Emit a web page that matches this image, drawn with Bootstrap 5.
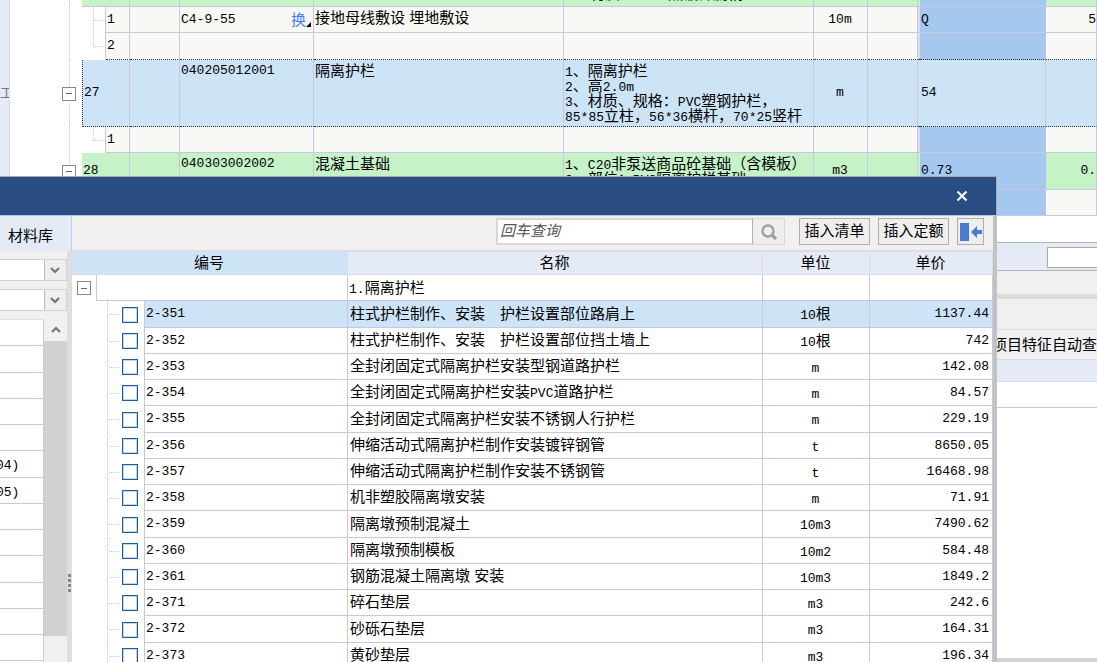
<!DOCTYPE html>
<html lang="zh-CN">
<head>
<meta charset="utf-8">
<meta name="viewport" content="width=device-width, initial-scale=1">
<title>清单计价</title>
<link href="https://cdn.jsdelivr.net/npm/bootstrap@5.3.0/dist/css/bootstrap.min.css" rel="stylesheet">
<style>
:root{--line:#c9c7df;--head:#e4ebf7;--pick:#cce4f6;--face:#f0f0f0}
body{font-family:"Liberation Sans","Noto Sans CJK SC",sans-serif;font-size:15px;line-height:15px;color:#000;background:#fff}
.asc,.code{font-family:"Liberation Mono","Noto Sans CJK SC",monospace;font-size:13px}
.asc{line-height:0}
table{table-layout:fixed;width:100%;border-collapse:separate;border-spacing:0}
td,th{padding:0 2px 1px 1px;font-weight:400;white-space:nowrap;overflow:hidden}

/* bill grid behind the dialog */
.strip{width:10px;background:var(--head);border-right:1px solid #d6d9f0;color:#777;padding-top:84px}
.bill td{border-right:1px solid var(--line);border-bottom:1px solid var(--line);background:#f8f8f4}
.bill .green td{background:#c5f3c7}
.bill .qty,.bill .green .qty{background:#a5c8ef;border-right-color:#b9bfe0}
.bill .gap-col{background:#dcdaec;padding:0;border-right:0}
.bill .active td{background:var(--pick);border-bottom:1px dotted #333}
.bill .before td:not(.rail):not(.twig){border-bottom:1px dotted #333}
.bill .active .no{border-left:1px dotted #333}
.bill tr td.rail{background:repeating-linear-gradient(#c9c7df 0 1px,#fff 1px 2px) 59px 0/1px 100% no-repeat #fff;border:0;padding:0 6px 0 52px}
.bill .top{vertical-align:top;padding-top:3px}
.bill td.twig{border-bottom:0;background:repeating-linear-gradient(#c9c7df 0 1px,#fff 1px 2px) 11px 0/1px 50% no-repeat,repeating-linear-gradient(90deg,#c9c7df 0 1px,#fff 1px 2px) 11px 50%/12px 1px no-repeat #fff}
.bill td.twig.more{background-size:1px 100%,12px 1px}
.h6r{height:7px}.h26{height:26px}.h27{height:27px}.h37{height:37px}.h67{height:67px}
.bill td.cut{padding:0 2px}
.cutoff{height:6px;padding:0 0 5px 24px;display:flex;align-items:flex-end;gap:48px}
.toggle{width:14px;height:14px;border:1px solid #888;background:#fff;padding:0;display:flex;align-items:center;justify-content:center}
.toggle::before{content:"";width:6px;height:1px;background:#666}
.swap{color:#4b78ff}

/* panels under the grid */
.under{--edge:calc(100% - 105px)}
.u-white{height:27px;border-bottom:1px solid #b4b4b4}
.u-find{height:28px;background:var(--head);border-bottom:1px solid #b4b4b4;padding:4px 0 3px calc(100% - 50px)}
.u-find input{height:21px;width:100%;border:1px solid #aaa;border-right:0}
.u-bar{height:23px;background:var(--face)}
.u-split{height:5px;background:#dcdcdc}
.u-tabs{height:31px;background:var(--face);border-bottom:1px solid #dadada}
.u-label{height:30px;background:var(--face);border-bottom:1px solid #d6d9f0;padding-left:var(--edge);line-height:29px;white-space:nowrap}
.u-head{height:22px;background:var(--head);border-bottom:1px solid #d6d9f0}
.u-row{height:26px;border-bottom:1px solid var(--line)}
.u-foot{height:4px;background:#d4d4d4}

/* material dialog */
.dlg{top:176px;left:0;bottom:0;width:calc(100% - 100px);background:var(--face);border-top:1px solid #a8a8a8}
.dlg-title{height:38px;background:#294d82;padding-right:28px;border-right:1px solid #a8a8a8}
.dlg-main{border-right:4px solid #c2c2c2;border-top:1px solid #b9c4e0}
.side{width:72px}
.tabtop{height:35px;background:var(--head);border:0;border-right:1px solid #b8d0ec;text-align:left;padding:4px 8px 0}
.combo{height:22px;width:67px;margin-bottom:8px;border:1px solid #d0d0d0;border-left:0;border-radius:0;appearance:none;background:url("data:image/svg+xml,%3Csvg xmlns='http://www.w3.org/2000/svg' width='22' height='20'%3E%3Cpath d='M0 0h22v20H0z' fill='%23eee'/%3E%3Cpath d='M0.500 0v20' stroke='%23bbb'/%3E%3Cpath d='M7 8l4 4 4-4' fill='none' stroke='%23777' stroke-width='2.200'/%3E%3C/svg%3E") right center no-repeat #fff}
.kinds{width:44px;background:#fff;border-right:1px solid var(--line);border-top:1px solid #e0e0e8}
.kinds>div{height:26px;border-bottom:1px solid var(--line);padding-top:5px;overflow:hidden}
.kinds>div:nth-child(4n+2){height:27px}
.kinds .code{margin-left:-4px}
.sbar{width:23px;background:var(--face)}
.sbar .up{height:22px;border:0;padding:0;background:var(--face)}
.sbar .thumb{height:92%;background:#d1d1d1}
.split{width:5px;background:#dedede;padding-bottom:70px;gap:2px}
.split i{width:3px;height:3px;background:#888}
.tools{height:36px;background:var(--face);border-bottom:2px solid #dcdce4;padding:2px 9px 0 0}
.query{width:257px;height:27px;border:2px solid #d8d8d8;border-right:1px solid #b0b0b0;padding:0 2px 2px;font-style:italic;border-radius:0}
.query::placeholder{color:#555}
.tbtn{height:27px;border:1px solid #aeaeae;background:#eee;padding:0 0 2px;width:71px}
.tbtn.find{width:32px;border-color:#d8d8d8;border-left:0;margin-right:14px;padding:0}
.tbtn.dock{width:27px;padding:0}
.tbtn.dock,.tbtn.quota{margin-left:8px}
.items th{height:23px;background:var(--head);border-right:1px solid #d6d9f0;border-bottom:1px solid #d6d9f0;text-align:center}
.items th.sorted{background:var(--pick)}
.items tbody tr{height:26px}
.items tbody tr:nth-child(4n+2){height:27px}
.items td{border-right:1px solid var(--line);border-bottom:1px solid var(--line)}
.items td.bare{border:0;padding:0 0 0 5px}
.items td.group{border-left:1px solid var(--line)}
.items td.fork{border-bottom:0;padding:0 0 0 26px;background:repeating-linear-gradient(#c9c7df 0 1px,#fff 1px 2px) 11px 0/1px 100% no-repeat,repeating-linear-gradient(90deg,#c9c7df 0 1px,#fff 1px 2px) 11px 50%/13px 1px no-repeat}
.items tr.on td:not(.bare):not(.fork){background:var(--pick)}
.items input{appearance:none;display:block;width:16px;height:16px;margin:0;border:1px solid #1f5c99;box-shadow:inset 0 0 0 1px #c3d6e8;background:#fff}
.items td:nth-child(4){padding-left:2px;padding-bottom:2px}
.items .unit{text-align:center}
.items .price{text-align:right;padding-right:3px}
</style>
</head>
<body>
<div class="position-relative vh-100 overflow-hidden d-flex flex-column">
  <div class="d-flex">
    <div class="strip overflow-hidden"><span class="asc">工</span></div>
    <table class="bill flex-grow-1 w-auto">
      <colgroup><col style="width:72px"><col style="width:24px"><col style="width:24px"><col style="width:50px"><col style="width:134px"><col style="width:250px"><col style="width:250px"><col style="width:54px"><col style="width:50px"><col style="width:2px"><col style="width:126px"><col></colgroup>
      <tbody>
      <tr class="green h6r"><td class="rail"></td><td colspan="2"></td><td></td><td></td><td></td><td class="cut"><div class="cutoff"><span>材质</span><span>热镀锌扁钢</span></div></td><td></td><td></td><td class="gap-col"></td><td class="qty"></td><td></td></tr>
      <tr class="h26"><td class="rail"></td><td class="twig more"></td><td class="code">1</td><td></td><td><div class="d-flex justify-content-between align-items-center"><span class="code">C4-9-55</span><span class="swap d-flex align-items-end">换<svg width="5" height="8" viewBox="0 0 5 8"><path d="M5 3v5H0z"/></svg></span></div></td><td class="top">接地母线敷设 埋地敷设</td><td></td><td class="code text-center">10m</td><td></td><td class="gap-col"></td><td class="qty code">Q</td><td class="code text-end pe-0">5</td></tr>
      <tr class="h27 before"><td class="rail"></td><td class="twig"></td><td class="code">2</td><td></td><td></td><td></td><td></td><td></td><td></td><td class="gap-col"></td><td class="qty"></td><td></td></tr>
      <tr class="h67 active"><td class="rail"><button class="toggle" aria-label="折叠 27"></button></td><td colspan="2" class="no code">27</td><td></td><td class="top code">040205012001</td><td class="top">隔离护栏</td><td class="top"><span class="asc">1</span>、隔离护栏<br><span class="asc">2</span>、高<span class="asc">2.0m</span><br><span class="asc">3</span>、材质、规格：<span class="asc">PVC</span>塑钢护栏，<br><span class="asc">85*85</span>立柱，<span class="asc">56*36</span>横杆，<span class="asc">70*25</span>竖杆</td><td class="code text-center">m</td><td></td><td class="gap-col"></td><td class="code">54</td><td></td></tr>
      <tr class="h26"><td class="rail"></td><td class="twig"></td><td class="code">1</td><td></td><td></td><td></td><td></td><td></td><td></td><td class="gap-col"></td><td class="qty"></td><td></td></tr>
      <tr class="h37 green"><td class="rail"><button class="toggle" aria-label="折叠 28"></button></td><td colspan="2" class="code">28</td><td></td><td class="top code">040303002002</td><td class="top">混凝土基础</td><td class="top"><span class="asc">1</span>、<span class="asc">C20</span>非泵送商品砼基础（含模板）<br><span class="asc">2</span>、部位：<span class="asc">PVC</span>隔离护栏基础</td><td class="code text-center">m3</td><td></td><td class="gap-col"></td><td class="qty code">0.73</td><td class="code text-end pe-0">0.</td></tr>
      <tr class="h26"><td class="rail"></td><td class="twig"></td><td></td><td></td><td></td><td></td><td></td><td></td><td></td><td class="gap-col"></td><td class="qty"></td><td></td></tr>
      </tbody>
    </table>
  </div>
  <div class="under flex-grow-1 d-flex flex-column">
    <div class="u-white"></div>
    <div class="u-find"><input type="text" class="d-block" aria-label="查找"></div>
    <div class="u-bar"></div><div class="u-split"></div><div class="u-tabs"></div>
    <div class="u-label overflow-hidden">项目特征自动查找</div>
    <div class="u-head"></div><div class="u-row"></div>
    <div class="flex-grow-1"></div><div class="u-foot"></div>
  </div>

  <section class="dlg position-absolute d-flex flex-column overflow-hidden" role="dialog" aria-label="材料库">
    <div class="dlg-title d-flex align-items-center justify-content-end flex-shrink-0">
      <button class="border-0 bg-transparent p-0 d-flex" aria-label="关闭"><svg width="12" height="12" viewBox="0 0 12 12"><path d="M1.500 1.500l9 9M10.500 1.500l-9 9" stroke="#f4f6fa" stroke-width="2.200"/></svg></button>
    </div>
    <div class="dlg-main d-flex flex-grow-1 overflow-hidden">
      <div class="side d-flex flex-column flex-shrink-0">
        <button class="tabtop flex-shrink-0 text-nowrap">材料库</button>
        <div class="d-flex flex-grow-1 overflow-hidden">
          <div class="d-flex flex-column flex-grow-1 pt-2 overflow-hidden">
            <select class="combo flex-shrink-0" aria-label="定额库"><option></option></select>
            <select class="combo flex-shrink-0" aria-label="专业"><option></option></select>
            <div class="d-flex flex-grow-1 overflow-hidden">
              <div class="kinds flex-shrink-0"><div></div><div></div><div></div><div></div><div></div><div><span class="code">04)</span></div><div><span class="code">05)</span></div><div></div><div></div><div></div><div></div><div></div><div></div></div>
              <div class="sbar d-flex flex-column">
                <button class="up d-flex align-items-center justify-content-center flex-shrink-0" aria-label="向上"><svg width="10" height="8" viewBox="0 0 10 8"><path d="M1 6l4-4 4 4" fill="none" stroke="#777" stroke-width="2.200"/></svg></button>
                <div class="flex-grow-1"><div class="thumb"></div></div>
              </div>
            </div>
          </div>
          <div class="split d-flex flex-column align-items-center justify-content-end"><i></i><i></i><i></i><i></i></div>
        </div>
      </div>
      <div class="flex-grow-1 bg-white overflow-hidden">
        <div class="tools d-flex align-items-start justify-content-end">
          <input class="query" type="text" placeholder="回车查询" aria-label="回车查询">
          <button class="tbtn find d-flex align-items-center justify-content-center" aria-label="查询"><svg width="18" height="18" viewBox="0 0 18 18" fill="none" stroke="#a0a0a0"><circle cx="8" cy="8" r="5.500" stroke-width="2.400"/><path d="M12 12l4 4" stroke-width="3.200"/></svg></button>
          <button class="tbtn">插入清单</button>
          <button class="tbtn quota">插入定额</button>
          <button class="tbtn dock d-flex align-items-center justify-content-center" aria-label="停靠"><svg width="22" height="18" viewBox="0 0 22 18" fill="#4a7bcc"><path d="M0 0h9v18H0zM11 9l6-6v4h5v4h-5v4z"/></svg></button>
        </div>
        <table class="items">
          <colgroup><col style="width:24px"><col style="width:11px"><col style="width:38px"><col style="width:203px"><col><col style="width:107px"><col style="width:123px"></colgroup>
          <thead><tr><th colspan="4" class="sorted">编号</th><th>名称</th><th>单位</th><th>单价</th></tr></thead>
          <tbody>
          <tr><td class="bare"><button class="toggle" aria-label="折叠"></button></td><td colspan="3" class="group"></td><td><span class="asc">1.</span>隔离护栏</td><td></td><td></td></tr>
          </tbody>
        </table>
      </div>
    </div>
  </section>
</div>
<script>
const items = [
  ['2-351','柱式护栏制作、安装　护栏设置部位路肩上','10根','1137.44'],
  ['2-352','柱式护栏制作、安装　护栏设置部位挡土墙上','10根','742'],
  ['2-353','全封闭固定式隔离护栏安装型钢道路护栏','m','142.08'],
  ['2-354','全封闭固定式隔离护栏安装PVC道路护栏','m','84.57'],
  ['2-355','全封闭固定式隔离护栏安装不锈钢人行护栏','m','229.19'],
  ['2-356','伸缩活动式隔离护栏制作安装镀锌钢管','t','8650.05'],
  ['2-357','伸缩活动式隔离护栏制作安装不锈钢管','t','16468.98'],
  ['2-358','机非塑胶隔离墩安装','m','71.91'],
  ['2-359','隔离墩预制混凝土','10m3','7490.62'],
  ['2-360','隔离墩预制模板','10m2','584.48'],
  ['2-361','钢筋混凝土隔离墩 安装','10m3','1849.2'],
  ['2-371','碎石垫层','m3','242.6'],
  ['2-372','砂砾石垫层','m3','164.31'],
  ['2-373','黄砂垫层','m3','196.34']
];
const mono = s => s.replace(/[A-Za-z0-9.]+/g, '<span class="asc">$&</span>');
document.querySelector('.items tbody').insertAdjacentHTML('beforeend', items.map(([code, name, unit, price], i) =>
  `<tr class="${i ? '' : 'on'}"><td class="bare"></td><td colspan="2" class="fork"><input type="checkbox" id="c${i}"></td><td class="code"><label for="c${i}">${code}</label></td><td>${mono(name)}</td><td class="unit">${mono(unit)}</td><td class="code price">${price}</td></tr>`).join(''));
</script>
<script src="https://cdn.jsdelivr.net/npm/bootstrap@5.3.0/dist/js/bootstrap.bundle.min.js"></script>
</body>
</html>
